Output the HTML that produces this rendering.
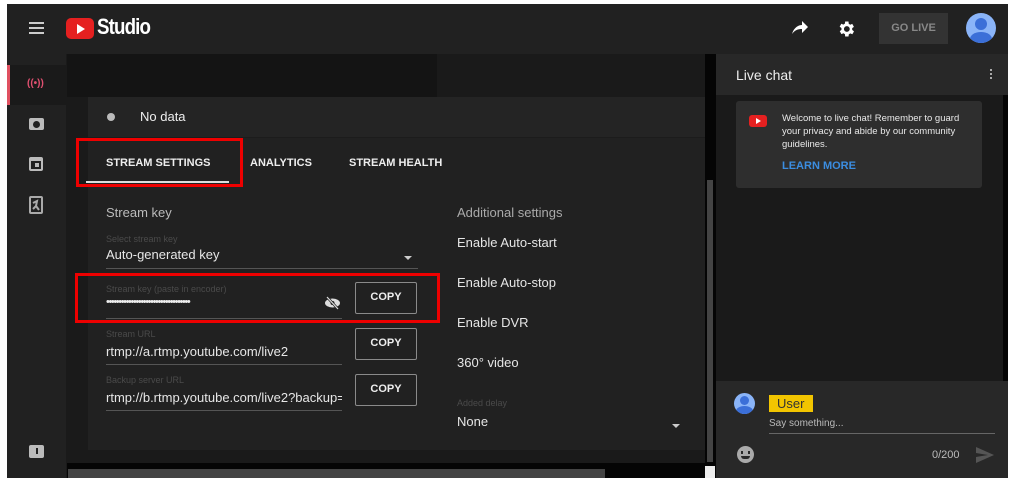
<!DOCTYPE html>
<html><head><meta charset="utf-8"><style>
*{margin:0;padding:0;box-sizing:border-box}
body{width:1017px;height:482px;background:#fff;position:relative;overflow:hidden;font-family:"Liberation Sans",Arial,sans-serif;color:#e8e8e8}
.a{position:absolute}
.t{position:absolute;white-space:nowrap}
.lbl{font-size:9px;color:#4a4a4a}
.val{font-size:13px;color:#e6e6e6}
.copy{position:absolute;width:62px;height:32px;border:1.5px solid #8a8a8a;border-radius:2px;color:#eee;font-size:11px;font-weight:bold;text-align:center;line-height:29px}
.line{position:absolute;height:1px;background:#555}
.set{font-size:13px;color:#e6e6e6}
</style></head><body>
<!-- header -->
<div class="a" style="left:7px;top:4px;width:1001px;height:50px;background:#212121"></div>
<div class="a" style="left:29px;top:22px;width:15px;height:2px;background:#ccc"></div>
<div class="a" style="left:29px;top:27px;width:15px;height:2px;background:#ccc"></div>
<div class="a" style="left:29px;top:32px;width:15px;height:2px;background:#ccc"></div>
<div class="a" style="left:66px;top:18px;width:28px;height:21px;background:#e52020;border-radius:5px"></div>
<div class="a" style="left:77px;top:24px;width:0;height:0;border-left:8px solid #fff;border-top:5px solid transparent;border-bottom:5px solid transparent"></div>
<div class="t" style="left:97px;top:14px;font-size:22px;font-weight:bold;color:#fff;letter-spacing:-1px;transform:scaleX(.85);transform-origin:left">Studio</div>
<svg class="a" style="left:791px;top:20px" width="18" height="16" viewBox="0 0 18 16"><path d="M1 14 C3 7 8 5 11 5 V1 L17 7 L11 13 V9 C7 9 4 10 1 14Z" fill="#fff"/></svg>
<svg class="a" style="left:836px;top:19px" width="20" height="20" viewBox="0 0 24 24"><path fill="#fff" d="M19.4 13a7.5 7.5 0 000-2l2.1-1.6-2-3.5-2.5 1a7 7 0 00-1.7-1L15 3h-4l-.4 2.7a7 7 0 00-1.7 1l-2.5-1-2 3.5L6.6 11a7.5 7.5 0 000 2l-2.1 1.6 2 3.5 2.5-1a7 7 0 001.7 1L11 21h4l.4-2.7a7 7 0 001.7-1l2.5 1 2-3.5zM13 15.5A3.5 3.5 0 1113 8.5a3.5 3.5 0 010 7z"/></svg>
<div class="a" style="left:879px;top:13px;width:69px;height:31px;background:#333;color:#888;font-size:11px;font-weight:bold;text-align:center;line-height:31px">GO LIVE</div>
<div class="a" style="left:966px;top:13px;width:30px;height:30px;border-radius:50%;background:#8ab4f8;overflow:hidden">
 <div class="a" style="left:9px;top:5px;width:12px;height:12px;border-radius:50%;background:#3b6fd8"></div>
 <div class="a" style="left:4px;top:19px;width:22px;height:14px;border-radius:50%;background:#3b6fd8"></div></div>
<!-- sidebar -->
<div class="a" style="left:7px;top:54px;width:60px;height:424px;background:#212121;border-right:1px solid #1a1a1a"></div>
<div class="a" style="left:10px;top:65px;width:56px;height:40px;background:#1a1a1a"></div>
<div class="a" style="left:7px;top:65px;width:3px;height:40px;background:#e05060"></div>
<div class="t" style="left:27px;top:78px;font-size:10px;color:#e05070;font-weight:bold">((•))</div>
<div class="a" style="left:29px;top:118px;width:15px;height:12px;background:#bbb;border-radius:2px"></div>
<div class="a" style="left:33px;top:121px;width:7px;height:7px;background:#212121;border-radius:50%"></div>
<div class="a" style="left:29px;top:157px;width:14px;height:14px;border:2px solid #bbb;border-top-width:4px;border-radius:2px"></div>
<div class="a" style="left:35px;top:163px;width:4px;height:4px;background:#bbb"></div>
<svg class="a" style="left:29px;top:196px" width="14" height="18" viewBox="0 0 14 18"><rect x="1" y="1" width="12" height="16" rx="1" fill="none" stroke="#aaa" stroke-width="2"/><path d="M4 7 L8 5 L7 10 L10 14 M7 10 L4 13" stroke="#aaa" stroke-width="2" fill="none"/></svg>
<div class="a" style="left:29px;top:445px;width:15px;height:13px;background:#bbb;border-radius:2px"></div>
<div class="a" style="left:36px;top:448px;width:2px;height:6px;background:#212121"></div>
<!-- main -->
<div class="a" style="left:67px;top:54px;width:638px;height:409px;background:#1a1a1a"></div>
<div class="a" style="left:67px;top:54px;width:370px;height:43px;background:#141414"></div>
<div class="a" style="left:88px;top:97px;width:617px;height:353px;background:#212121"></div>
<div class="a" style="left:88px;top:97px;width:617px;height:41px;background:#242424;border-bottom:1px solid #1c1c1c"></div>
<div class="a" style="left:107px;top:113px;width:8px;height:8px;border-radius:50%;background:#bbb"></div>
<div class="t" style="left:140px;top:109px;font-size:13px;color:#eee">No data</div>
<div class="t" style="left:106px;top:157px;font-size:11px;font-weight:bold;color:#eee">STREAM SETTINGS</div>
<div class="t" style="left:250px;top:157px;font-size:11px;font-weight:bold;color:#eee">ANALYTICS</div>
<div class="t" style="left:349px;top:157px;font-size:11px;font-weight:bold;color:#eee">STREAM HEALTH</div>
<div class="a" style="left:86px;top:181px;width:143px;height:2px;background:#ddd"></div>
<div class="a" style="left:76px;top:138px;width:167px;height:49px;border:3px solid #e00"></div>
<div class="t" style="left:106px;top:205px;font-size:13px;color:#bbb">Stream key</div>
<div class="t lbl" style="left:106px;top:234px">Select stream key</div>
<div class="t val" style="left:106px;top:247px">Auto-generated key</div>
<div class="a" style="left:404px;top:256px;border-top:4px solid #ccc;border-left:4px solid transparent;border-right:4px solid transparent"></div>
<div class="line" style="left:106px;top:268px;width:312px"></div>
<div class="t lbl" style="left:106px;top:284px">Stream key (paste in encoder)</div>
<div class="t" style="left:106px;top:296px;font-size:11px;color:#eee;letter-spacing:-1.4px">••••••••••••••••••••••••••••••••••</div>
<svg class="a" style="left:324px;top:296px" width="17" height="14" viewBox="0 0 17 14"><ellipse cx="8.5" cy="7" rx="7.5" ry="4.5" fill="#ddd"/><circle cx="8.5" cy="7" r="2" fill="#212121"/><line x1="3" y1="1" x2="14" y2="13" stroke="#212121" stroke-width="2.5"/><line x1="3" y1="1" x2="14" y2="13" stroke="#ddd" stroke-width="1.2"/></svg>
<div class="line" style="left:106px;top:318px;width:236px"></div>
<div class="copy" style="left:355px;top:282px">COPY</div>
<div class="a" style="left:75px;top:273px;width:365px;height:50px;border:3px solid #e00"></div>
<div class="t lbl" style="left:106px;top:329px">Stream URL</div>
<div class="t val" style="left:106px;top:344px">rtmp://a.rtmp.youtube.com/live2</div>
<div class="line" style="left:106px;top:364px;width:236px"></div>
<div class="copy" style="left:355px;top:328px">COPY</div>
<div class="t lbl" style="left:106px;top:375px">Backup server URL</div>
<div class="t val" style="left:106px;top:390px;width:236px;overflow:hidden">rtmp://b.rtmp.youtube.com/live2?backup=1</div>
<div class="line" style="left:106px;top:410px;width:236px"></div>
<div class="copy" style="left:355px;top:374px">COPY</div>
<div class="t" style="left:457px;top:205px;font-size:13px;color:#aaa">Additional settings</div>
<div class="t set" style="left:457px;top:235px">Enable Auto-start</div>
<div class="t set" style="left:457px;top:275px">Enable Auto-stop</div>
<div class="t set" style="left:457px;top:315px">Enable DVR</div>
<div class="t set" style="left:457px;top:355px">360° video</div>
<div class="t lbl" style="left:457px;top:398px">Added delay</div>
<div class="t set" style="left:457px;top:414px">None</div>
<div class="a" style="left:672px;top:424px;border-top:4px solid #ccc;border-left:4px solid transparent;border-right:4px solid transparent"></div>
<!-- v scroll -->
<div class="a" style="left:705px;top:54px;width:11px;height:424px;background:#050505"></div>
<div class="a" style="left:707px;top:180px;width:6px;height:282px;background:#444"></div>
<div class="a" style="left:705px;top:466px;width:10px;height:12px;background:#eee"></div>
<!-- h scroll -->
<div class="a" style="left:67px;top:463px;width:638px;height:15px;background:#050505"></div>
<div class="a" style="left:68px;top:469px;width:537px;height:9px;background:#444"></div>
<!-- chat -->
<div class="a" style="left:716px;top:54px;width:292px;height:424px;background:#1a1a1a"></div>
<div class="a" style="left:716px;top:54px;width:292px;height:41px;background:#282828"></div>
<div class="t" style="left:736px;top:67px;font-size:14px;color:#eee">Live chat</div>
<div class="a" style="left:990px;top:69px;width:2px;height:2px;background:#aaa;box-shadow:0 4px #aaa,0 8px #aaa"></div>
<div class="a" style="left:1003px;top:95px;width:5px;height:286px;background:#050505"></div>
<div class="a" style="left:736px;top:101px;width:246px;height:87px;background:#2e2e2e;border-radius:3px"></div>
<div class="a" style="left:749px;top:115px;width:18px;height:12px;background:#e52020;border-radius:3px"></div>
<div class="a" style="left:756px;top:118px;border-left:5px solid #fff;border-top:3px solid transparent;border-bottom:3px solid transparent"></div>
<div class="t" style="left:782px;top:112px;font-size:9.5px;color:#e8e8e8;line-height:13px;white-space:normal;width:195px">Welcome to live chat! Remember to guard your privacy and abide by our community guidelines.</div>
<div class="t" style="left:782px;top:160px;font-size:11px;font-weight:bold;color:#3b8de0">LEARN MORE</div>
<div class="a" style="left:716px;top:381px;width:292px;height:97px;background:#282828"></div>
<div class="a" style="left:734px;top:393px;width:21px;height:21px;border-radius:50%;background:#8ab4f8;overflow:hidden">
 <div class="a" style="left:6px;top:3px;width:9px;height:9px;border-radius:50%;background:#3b6fd8"></div>
 <div class="a" style="left:2px;top:13px;width:17px;height:10px;border-radius:50%;background:#3b6fd8"></div></div>
<div class="a" style="left:769px;top:395px;width:44px;height:17px;background:#f2c500"></div>
<div class="t" style="left:777px;top:396px;font-size:13px;color:#333">User</div>
<div class="t" style="left:769px;top:418px;font-size:10px;color:#bbb">Say something...</div>
<div class="a" style="left:769px;top:433px;width:226px;height:1px;background:#666"></div>
<div class="a" style="left:737px;top:446px;width:17px;height:17px;border-radius:50%;background:#aaa"></div>
<div class="a" style="left:741px;top:451px;width:2px;height:3px;background:#282828;box-shadow:7px 0 #282828"></div>
<div class="a" style="left:741px;top:456px;width:9px;height:3px;border-radius:0 0 5px 5px;background:#282828"></div>
<div class="t" style="left:932px;top:449px;font-size:11px;color:#bbb">0/200</div>
<svg class="a" style="left:976px;top:447px" width="18" height="16" viewBox="0 0 18 16"><path d="M0 0 L18 8 L0 16 L0 10 L12 8 L0 6Z" fill="#555"/></svg>
</body></html>
